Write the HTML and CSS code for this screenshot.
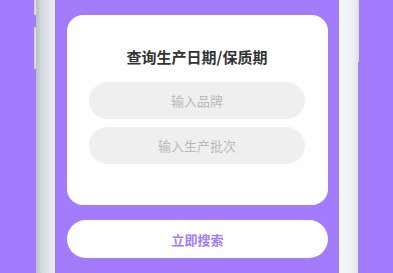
FILE: index.html
```html
<!DOCTYPE html>
<html lang="zh">
<head>
    <meta charset="utf-8">
    <meta name="viewport" content="width=device-width, initial-scale=1.0">
    <title>查询生产日期</title>
    <link rel="stylesheet" href="styles.css">
</head>
<body>
    <div class="phone">
        <div class="side-keys">
            <span class="key key-top"></span>
            <span class="key key-long"></span>
        </div>
        <div class="bezel bezel-left"></div>

        <div class="screen">
            <div class="card">
                <h1 class="title">查询生产日期/保质期</h1>
                <input type="text" class="field" placeholder="输入品牌">
                <input type="text" class="field" placeholder="输入生产批次">
            </div>
            <button type="button" class="search-btn">立即搜索</button>
        </div>

        <div class="bezel bezel-right"></div>
        <div class="side-keys side-keys-right">
            <span class="key key-power"></span>
        </div>
    </div>
</body>
</html>
```

FILE: styles.css
```css
body {
    margin: 0;
    background-color: #a27cfd;
    font-family: "Noto Sans CJK SC", "Noto Sans", sans-serif;
    height: 273px;
    overflow: hidden;
}

.phone {
    display: flex;
    height: 273px;
    padding-left: 34px;
}

.side-keys {
    width: 2px;
    display: flex;
    flex-direction: column;
}
.key {
    display: block;
    background: linear-gradient(to right, #c9ced4, #e9ecef);
    border-radius: 1px;
}
.key-top {
    height: 15px;
}
.key-long {
    height: 42px;
    margin-top: 12px;
}
.side-keys-right {
    width: 1px;
}
.key-power {
    height: 62px;
    background: #d8dcdf;
}

.bezel {
    width: 19px;
}
.bezel-left {
    background: linear-gradient(to right, #b9bfc7, #d3d8dd 30%, #e7eaed 80%, #eceef0);
}
.bezel-right {
    background: linear-gradient(to right, #f6f7f8, #f1f3f4 60%, #e2e5e8);
}

.screen {
    width: 284px;
    box-sizing: border-box;
    padding: 15px 11px 0 12px;
}

.card {
    background: #fff;
    border-radius: 16px;
    padding: 32px 23px 41px 22px;
    display: flex;
    flex-direction: column;
    gap: 8px;
}
.title {
    margin: 0 0 7px;
    font-size: 15px;
    line-height: 20px;
    font-weight: bold;
    color: #333;
    text-align: center;
}
.field {
    height: 37px;
    border: none;
    border-radius: 19px;
    background: #efefef;
    text-align: center;
    font-family: inherit;
    font-size: 13px;
    color: #333;
    padding: 0;
    outline: none;
}
.field::placeholder {
    color: #b9b9b9;
}

.search-btn {
    display: block;
    width: 100%;
    height: 38px;
    margin-top: 15px;
    border: none;
    border-radius: 19px;
    background: #fff;
    color: #a27cfd;
    font-family: inherit;
    font-size: 13px;
    font-weight: bold;
}
```
